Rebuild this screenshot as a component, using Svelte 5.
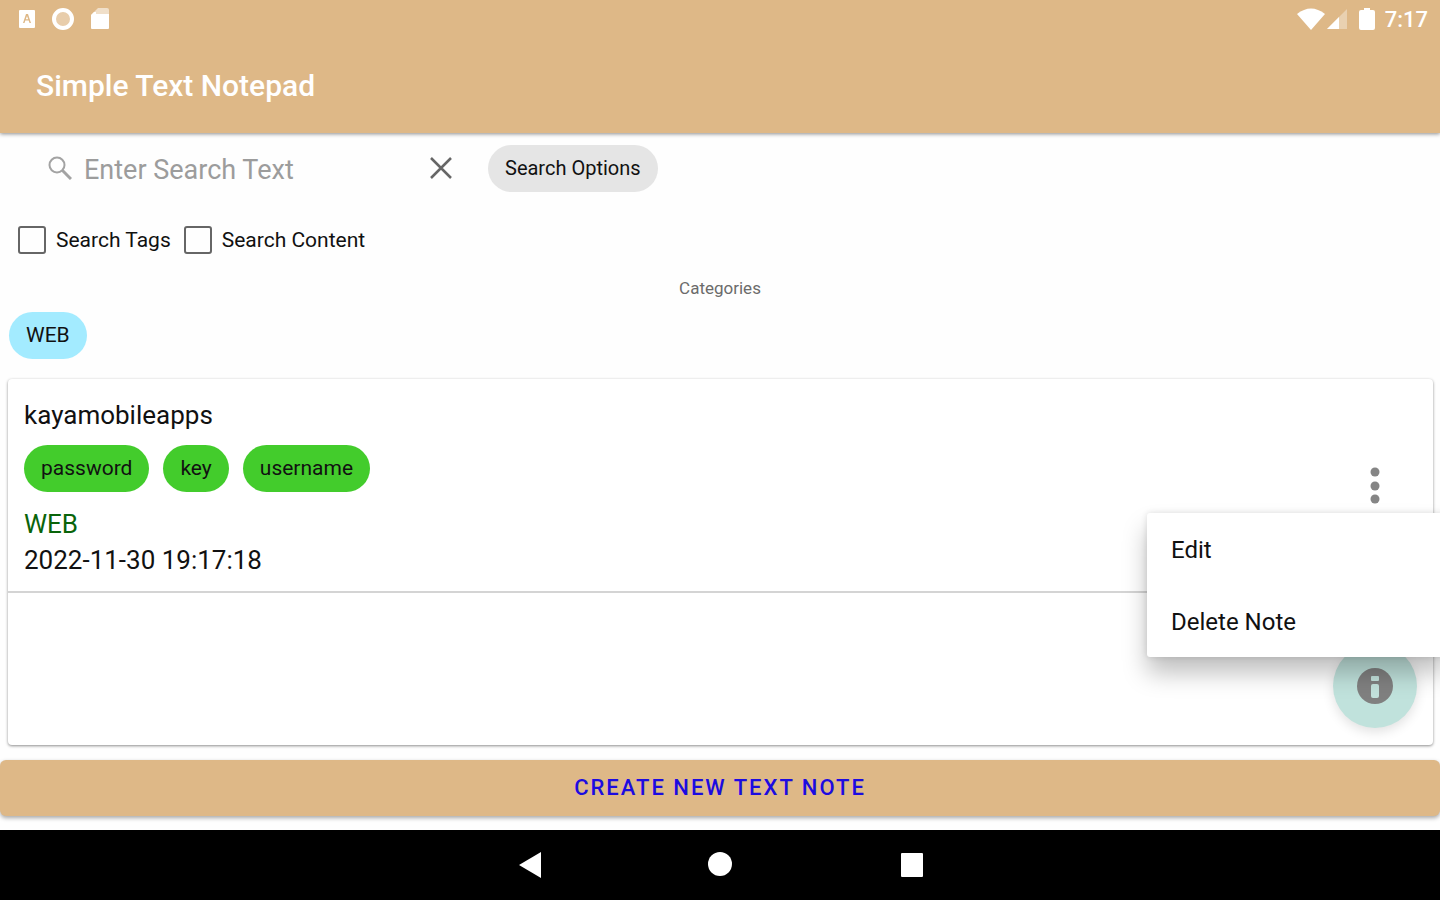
<script lang="ts">
  interface Note {
    title: string;
    tags: string[];
    category: string;
    createdAt: string;
  }

  const categories = ['WEB'];
  const notes: Note[] = [
    {
      title: 'kayamobileapps',
      tags: ['password', 'key', 'username'],
      category: 'WEB',
      createdAt: '2022-11-30 19:17:18'
    }
  ];

  let query = $state('');
  let searchTags = $state(false);
  let searchContent = $state(false);
  let openMenu = $state(0);

  function toggleMenu(index: number) {
    openMenu = openMenu === index ? -1 : index;
  }
</script>

<div class="screen">
  <header class="app-header">
    <div class="status-bar">
      <div class="status-icons">
        <svg width="18" height="20" viewBox="0 0 18 20" aria-hidden="true">
          <path fill="#fff" fill-rule="evenodd" d="M2 1h14a1 1 0 0 1 1 1v16a1 1 0 0 1-1 1H2a1 1 0 0 1-1-1V2a1 1 0 0 1 1-1zm6 4L5 14h1.500l.8-2.500h3.400l.8 2.500H13L10 5zm1 2l1.200 3.200H7.800z" />
        </svg>
        <svg width="24" height="24" viewBox="0 0 24 24" aria-hidden="true">
          <circle cx="12" cy="12" r="9" fill="#fff" fill-opacity="0.3" stroke="#fff" stroke-width="4" />
        </svg>
        <svg width="20" height="24" viewBox="0 0 20 24" aria-hidden="true">
          <path fill="#fff" opacity="0.55" d="M8 1h9q2 0 2 2v6H1V8z" />
          <path fill="#fff" d="M1 8l3-3h2v2h13v14q0 1-1 1H2q-1 0-1-1z" />
        </svg>
      </div>
      <div class="status-info">
        <svg width="28" height="22" viewBox="0 0 28 22" aria-hidden="true">
          <path fill="#fff" d="M0 6Q14-5 28 6L14 22z" />
        </svg>
        <svg class="signal" width="20" height="20" viewBox="0 0 20 20" aria-hidden="true">
          <path fill="#fff" opacity="0.35" d="M20 0v20H0z" />
          <path fill="#fff" d="M12 8v12H0z" />
        </svg>
        <svg class="battery" width="16" height="22" viewBox="0 0 16 22" aria-hidden="true">
          <path fill="#fff" d="M5 0h6v2h3q2 0 2 2v16q0 2-2 2H2q-2 0-2-2V4q0-2 2-2h3z" />
        </svg>
        <span class="clock">7:17</span>
      </div>
    </div>
    <h1 class="app-title">Simple Text Notepad</h1>
  </header>

  <main class="content">
    <div class="search-row">
      <div class="search-box">
        <svg width="24" height="24" viewBox="0 0 24 24" aria-hidden="true">
          <g fill="none" stroke="#a3a3a3" stroke-width="2">
            <circle cx="9" cy="9" r="7.500" />
            <path d="M14.500 14.500l8.500 8.500" stroke-width="3" />
          </g>
        </svg>
        <input class="search-input" type="text" aria-label="Search text" placeholder="Enter Search Text" bind:value={query} />
        <button class="icon-button" type="button" aria-label="Clear search" onclick={() => (query = '')}>
          <svg width="22" height="22" viewBox="0 0 22 22" aria-hidden="true">
            <path fill="none" stroke="#666" stroke-width="2.500" d="M1 1l20 20M21 1L1 21" />
          </svg>
        </button>
      </div>
      <button class="chip chip-options" type="button">Search Options</button>
    </div>

    <div class="filter-row">
      <label class="filter">
        <input type="checkbox" bind:checked={searchTags} />
        Search Tags
      </label>
      <label class="filter">
        <input type="checkbox" bind:checked={searchContent} />
        Search Content
      </label>
    </div>

    <h2 class="categories-title">Categories</h2>
    <div class="category-row">
      {#each categories as category}
        <button class="chip chip-category" type="button">{category}</button>
      {/each}
    </div>

    <section class="note-list">
      {#each notes as note, index}
        <article class="note">
          <div class="note-body">
            <h3 class="note-title">{note.title}</h3>
            <div class="tag-row">
              {#each note.tags as tag}
                <span class="chip chip-tag">{tag}</span>
              {/each}
            </div>
            <p class="note-text note-category">{note.category}</p>
            <p class="note-text">{note.createdAt}</p>
          </div>
          <button class="icon-button more-button" type="button" aria-label="Note menu" onclick={() => toggleMenu(index)}>
            <svg width="12" height="38" viewBox="0 0 12 38" aria-hidden="true">
              <g fill="#858585">
                <circle cx="6" cy="6" r="4.500" />
                <circle cx="6" cy="20" r="4.500" />
                <circle cx="6" cy="33" r="4.500" />
              </g>
            </svg>
          </button>
          {#if openMenu === index}
            <div class="menu">
              <button class="menu-item" type="button">Edit</button>
              <button class="menu-item" type="button">Delete Note</button>
            </div>
          {/if}
        </article>
      {/each}
      <button class="info-button" type="button" aria-label="About">
        <svg width="36" height="36" viewBox="0 0 36 36" aria-hidden="true">
          <circle cx="18" cy="18" r="18" fill="#808080" />
          <rect x="14" y="8" width="8" height="5" rx="1" fill="#c3e2dc" />
          <rect x="14" y="16" width="8" height="14" rx="2" fill="#c3e2dc" />
        </svg>
      </button>
    </section>

    <button class="create-button" type="button">Create new text note</button>
  </main>

  <nav class="nav-bar" aria-label="System navigation">
    <button class="icon-button" type="button" aria-label="Back">
      <svg width="26" height="26" viewBox="0 0 26 26" aria-hidden="true">
        <path fill="#fff" d="M26 0v26L4 13z" />
      </svg>
    </button>
    <button class="icon-button" type="button" aria-label="Home">
      <svg width="26" height="26" viewBox="0 0 26 26" aria-hidden="true">
        <circle cx="13" cy="12" r="12" fill="#fff" />
      </svg>
    </button>
    <button class="icon-button" type="button" aria-label="Recent apps">
      <svg width="26" height="26" viewBox="0 0 26 26" aria-hidden="true">
        <rect x="2" y="1" width="22" height="24" rx="1" fill="#fff" />
      </svg>
    </button>
  </nav>
</div>

<style>
  :global(body) {
    margin: 0;
    background: #fefefe;
  }

  .screen {
    display: flex;
    flex-direction: column;
    min-height: 100vh;
    overflow: hidden;
    font-family: Roboto, 'Liberation Sans', sans-serif;
    color: #111;
  }

  button,
  input {
    font: inherit;
    color: inherit;
  }

  button {
    padding: 0;
    border: 0;
    background: none;
    cursor: pointer;
  }

  svg {
    display: block;
    flex-shrink: 0;
  }

  .app-header {
    background: #deb887;
    box-shadow: 0 1px 4px rgba(0, 0, 0, 0.45);
    color: #fff;
  }

  .status-bar {
    display: flex;
    justify-content: space-between;
    align-items: center;
    height: 38px;
    padding: 0 12px 0 18px;
  }

  .status-icons {
    display: flex;
    align-items: center;
    gap: 15px;
  }

  .status-info {
    display: flex;
    align-items: center;
  }

  .signal {
    margin-left: 2px;
  }

  .battery {
    margin: 0 10px 0 12px;
  }

  .clock {
    font-size: 22px;
    font-weight: 500;
  }

  .app-title {
    margin: 0;
    padding: 1px 36px 0;
    font-size: 30px;
    font-weight: 500;
    line-height: 94px;
  }

  .content {
    display: flex;
    flex: 1;
    flex-direction: column;
  }

  .search-row {
    display: flex;
    align-items: center;
    gap: 32px;
    height: 70px;
    padding-left: 48px;
  }

  .search-box {
    display: flex;
    align-items: center;
    gap: 12px;
    width: 408px;
  }

  .search-input {
    flex: 1;
    min-width: 0;
    padding: 4px 0 0;
    border: 0;
    outline: 0;
    background: none;
    font-size: 27px;
    line-height: 36px;
  }

  .search-input::placeholder {
    color: #9c9c9c;
    opacity: 1;
  }

  .icon-button {
    display: flex;
    align-items: center;
    justify-content: center;
  }

  .search-box .icon-button {
    padding: 4px;
  }

  .chip {
    padding: 0 17px;
    border-radius: 24px;
    background: #e5e5e5;
    font-size: 21px;
    line-height: 47px;
  }

  .chip-options {
    font-size: 20px;
  }

  .chip-category {
    background: #a3ebff;
  }

  .chip-tag {
    background: #43cc2c;
  }

  .filter-row {
    display: flex;
    gap: 13px;
    height: 73px;
    padding-left: 18px;
  }

  .filter {
    display: flex;
    align-items: center;
    gap: 10px;
    font-size: 21px;
  }

  .filter input {
    width: 28px;
    height: 28px;
    margin: 0;
    border: 2px solid #666;
    border-radius: 3px;
    appearance: none;
  }

  .filter input:checked {
    background: #666;
  }

  .categories-title {
    margin: 0;
    color: #6b6b6b;
    font-size: 17px;
    font-weight: 400;
    line-height: 24px;
    text-align: center;
  }

  .category-row {
    display: flex;
    gap: 14px;
    padding: 12px 9px 20px;
  }

  .note-list {
    position: relative;
    flex: 1;
    margin: 0 7px 15px 8px;
    border-radius: 4px;
    background: #fff;
    box-shadow: 0 1px 3px rgba(0, 0, 0, 0.45);
  }

  .note {
    position: relative;
    z-index: 1;
    display: flex;
    justify-content: space-between;
    border-bottom: 2px solid #d4d4d4;
  }

  .note-body {
    padding: 18px 16px 13px;
  }

  .note-title,
  .note-text {
    margin: 0;
    font-size: 26px;
    font-weight: 400;
    line-height: 36px;
  }

  .tag-row {
    display: flex;
    gap: 14px;
    padding: 12px 0 14px;
  }

  .note-category {
    color: #0a640a;
  }

  .more-button {
    align-self: center;
    padding: 0 52px;
  }

  .menu {
    position: absolute;
    top: 134px;
    right: -12px;
    width: 298px;
    border-radius: 3px;
    background: #fff;
    box-shadow: 0 16px 24px rgba(0, 0, 0, 0.25), 0 0 6px rgba(0, 0, 0, 0.12);
  }

  .menu-item {
    display: block;
    width: 100%;
    padding: 2px 24px 0;
    font-size: 24px;
    line-height: 70px;
    text-align: left;
  }

  .info-button {
    position: absolute;
    right: 16px;
    bottom: 17px;
    display: flex;
    align-items: center;
    justify-content: center;
    width: 84px;
    height: 84px;
    border-radius: 50%;
    background: #c0e2dc;
    box-shadow: 0 4px 12px rgba(0, 0, 0, 0.12);
  }

  .create-button {
    margin-bottom: 14px;
    border-radius: 6px;
    background: #deb887;
    box-shadow: 0 2px 4px rgba(0, 0, 0, 0.35);
    color: #1c0be0;
    font-size: 22px;
    font-weight: 500;
    line-height: 56px;
    letter-spacing: 2px;
    text-transform: uppercase;
  }

  .nav-bar {
    display: flex;
    align-items: center;
    justify-content: center;
    gap: 166px;
    height: 70px;
    background: #000;
  }
</style>
